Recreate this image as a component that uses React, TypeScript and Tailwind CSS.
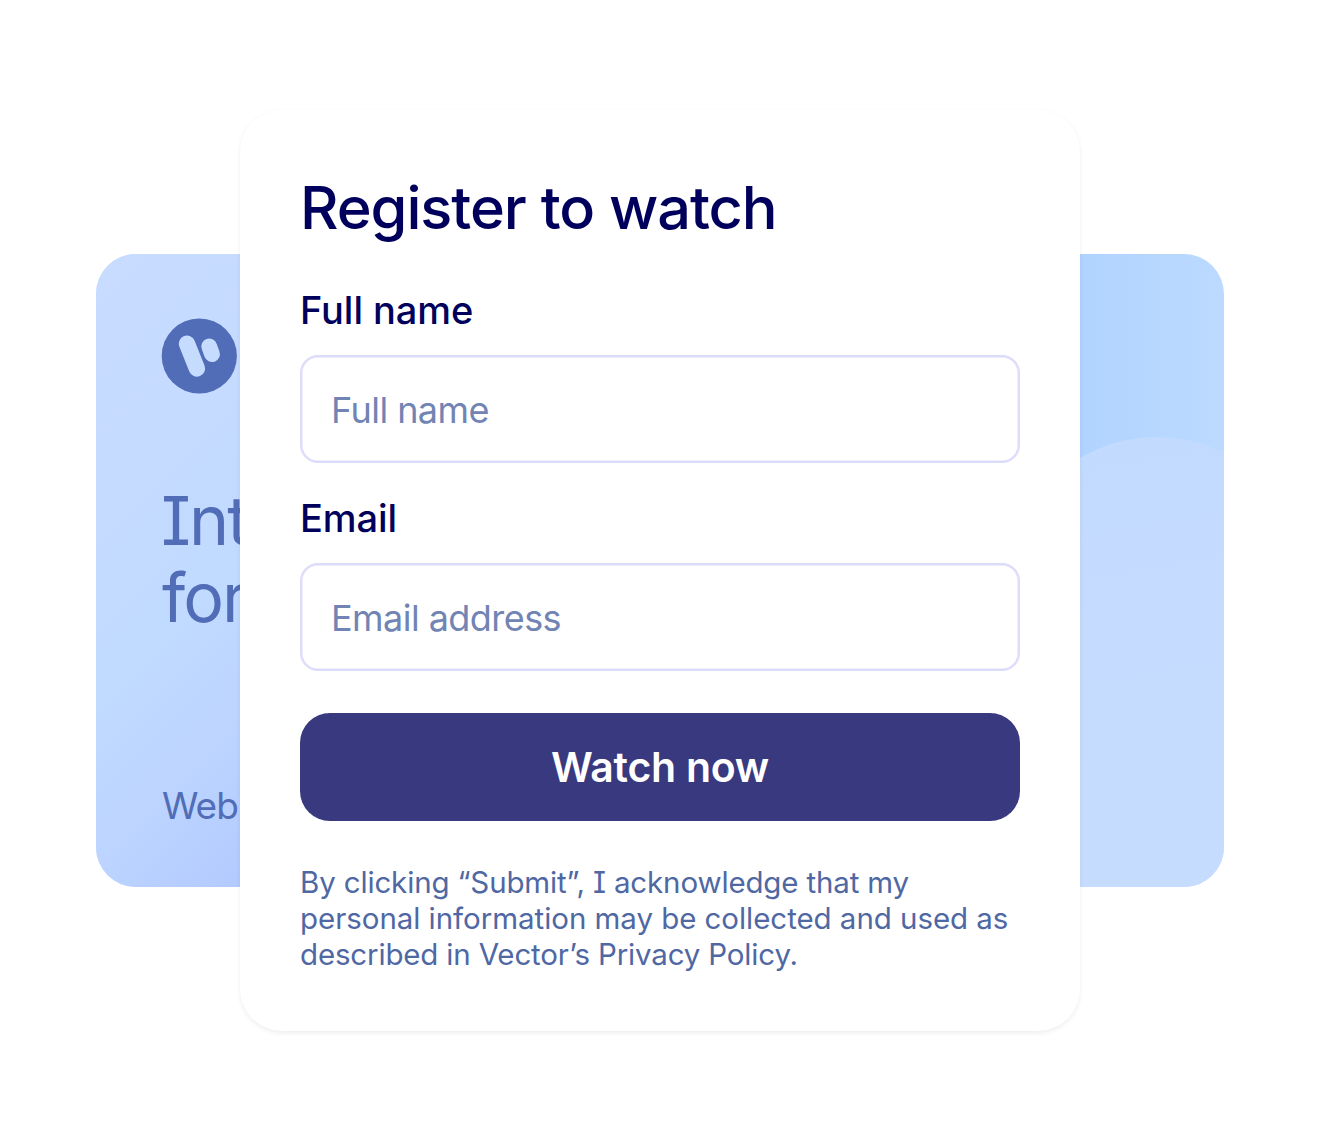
import React from 'react';

function Logo() {
  return (
    <svg viewBox="0 0 76 76" className="block size-[76px]" aria-hidden="true">
      <circle cx="38.3" cy="38" r="37.6" fill="#526db7" />
      <g stroke="#c5dcff" strokeLinecap="round">
        <path strokeWidth="16.4" d="M26 25.7 L35.9 50.5" />
        <path strokeWidth="15.8" d="M48.2 28.4 L51 36.2" />
      </g>
    </svg>
  );
}

function Banner() {
  return (
    <section className="relative h-[633px] w-[1128px] overflow-hidden rounded-[40px] bg-linear-to-r from-[#c4dcff] via-[#a5cdff] via-75% to-[#bcdaff] [grid-area:1/1]">
      <div className="absolute inset-y-0 left-0 w-[360px] bg-[linear-gradient(135deg,#c7dcff_0%,#c5dbff_25%,#c1daff_45%,#bcd4ff_62%,#b3caff_78%,#a8bfff_100%)]" />
      <div className="absolute top-[183px] left-[908px] h-[900px] w-[306px] rounded-full bg-linear-170 from-[#c3daff] via-[#c5dcff] via-30% to-[#c7ddff]" />
      <div className="relative flex flex-col items-start pt-16 pl-[65px] text-[#526db7]">
        <Logo />
        <h1 className="mt-[88px] text-[68px] leading-[77px] font-normal tracking-[-2px] [font-feature-settings:'cv08']">
          Int
          <br />
          <span className="ml-px">for</span>
        </h1>
        <p className="mt-[148px] ml-px text-[37px] leading-[44px] tracking-[-1px]">
          Web
        </p>
      </div>
    </section>
  );
}

interface FieldProps {
  id: string;
  label: string;
  placeholder: string;
}

function Field({ id, label, placeholder }: FieldProps) {
  return (
    <div className="flex flex-col gap-[21px]">
      <label
        htmlFor={id}
        className="text-[38px] leading-[47px] font-medium tracking-[-0.05px] text-[#00005c]"
      >
        {label}
      </label>
      <input
        id={id}
        placeholder={placeholder}
        className="h-[108px] w-full rounded-[18px] border-2 border-[#dddcfb] bg-white px-[29px] pt-[3px] text-[36px] tracking-[-0.55px] shadow-[inset_0_0_0_0.5px_#dddcfb] outline-none placeholder:text-[#7184b3] placeholder:opacity-100"
      />
    </div>
  );
}

export default function App() {
  return (
    <main className="grid h-[1140px] w-[1320px] place-items-center overflow-hidden bg-white font-['Inter',sans-serif]">
      <Banner />
      <form
        className="relative flex h-[921px] w-[840px] flex-col rounded-[42px] bg-white px-[60px] pt-[57px] shadow-[0_2px_5px_rgba(0,0,40,0.07)] [grid-area:1/1]"
        onSubmit={(e) => e.preventDefault()}
      >
        <h2 className="text-[59.5px] leading-[80px] font-medium tracking-[-1.05px] text-[#00005c]">
          Register to watch
        </h2>
        <div className="mt-10 flex flex-col gap-8">
          <Field id="name" label="Full name" placeholder="Full name" />
          <Field id="email" label="Email" placeholder="Email address" />
        </div>
        <button
          type="submit"
          className="mt-[42px] h-[108px] shrink-0 rounded-[30px] bg-[#39397f] pt-0.5 text-[41px] font-semibold tracking-[-0.25px] text-white"
        >
          Watch now
        </button>
        <p className="mt-[43px] text-[29.5px] leading-9 text-[#4f68a3] [font-feature-settings:'cv08'] [&>span]:block [&>span]:whitespace-nowrap">
          <span className="tracking-[-0.15px]">By clicking “Submit”, I acknowledge that my</span>
          <span className="tracking-[-0.05px]">personal information may be collected and used as</span>
          <span className="tracking-[-0.17px]">described in Vector’s Privacy Policy.</span>
        </p>
      </form>
    </main>
  );
}
